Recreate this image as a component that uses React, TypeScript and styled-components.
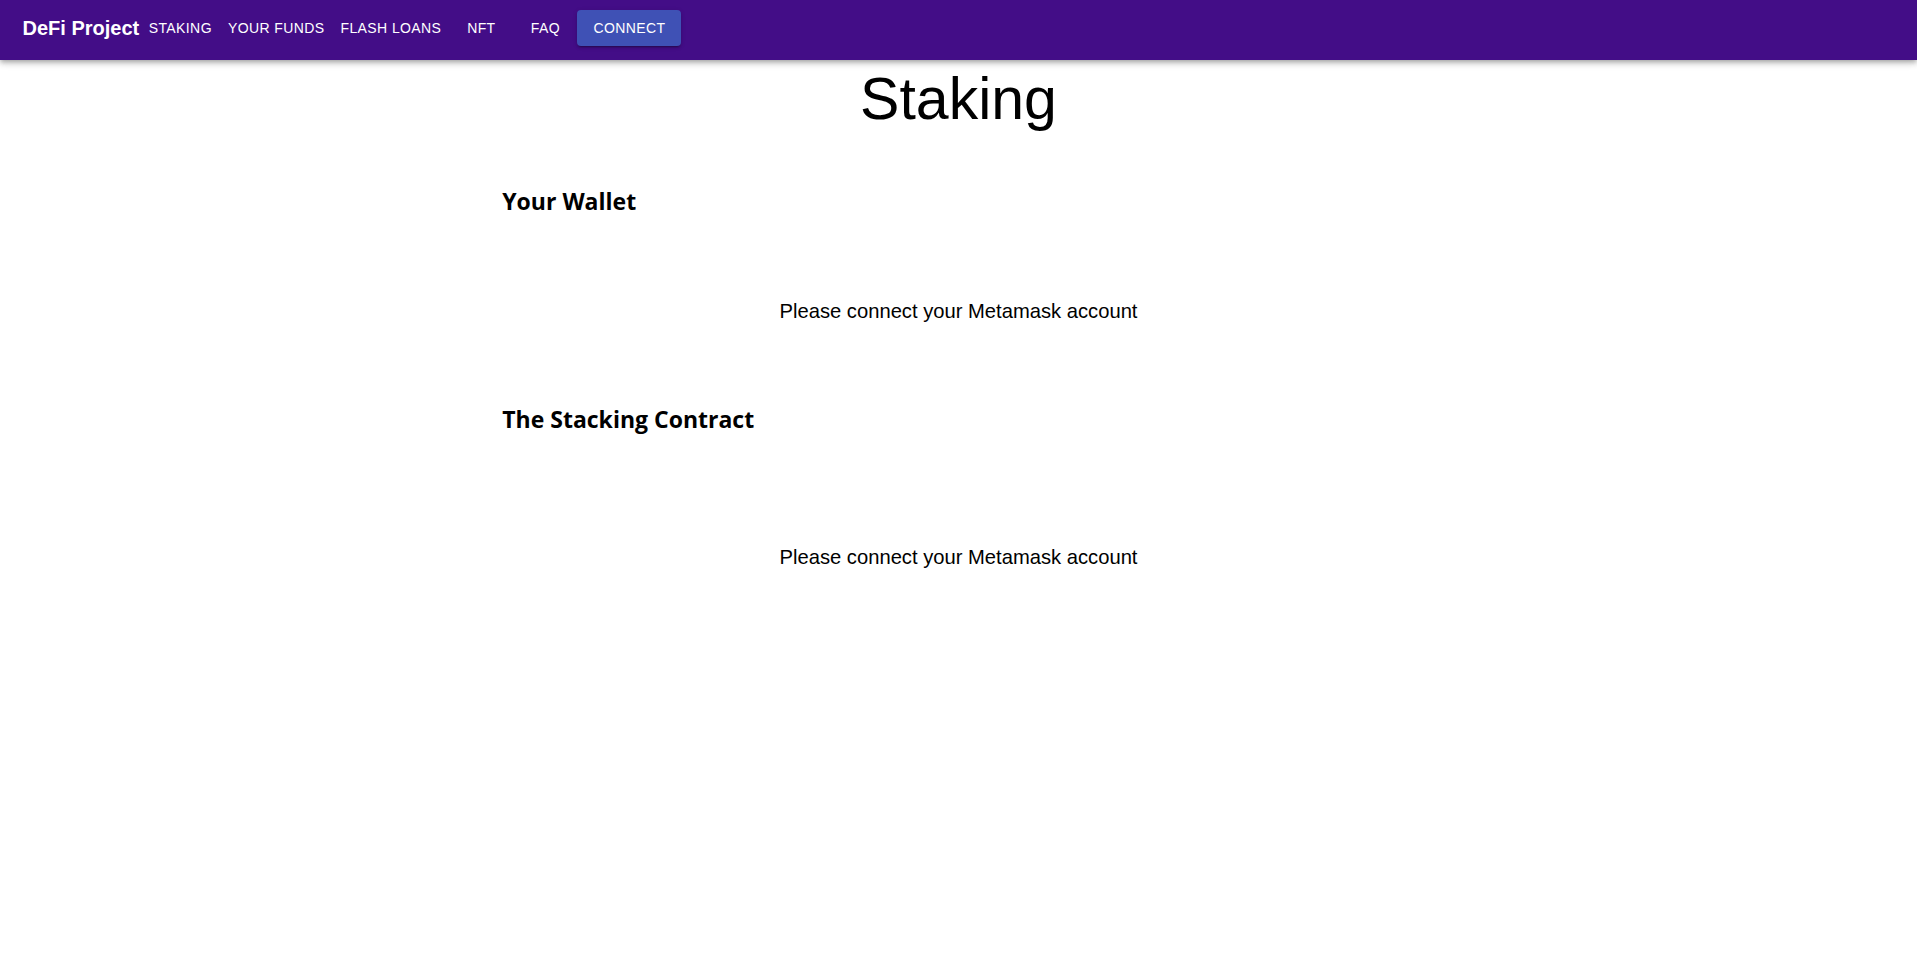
import React from "react";
import styled, { createGlobalStyle } from "styled-components";

const GlobalStyle = createGlobalStyle`
  html, body {
    margin: 0;
    padding: 0;
    background: #ffffff;
  }
  body {
    font-family: "Liberation Sans", Arial, Helvetica, sans-serif;
    color: #000000;
  }
`;

const AppBar = styled.header`
  height: 60px;
  box-sizing: border-box;
  display: flex;
  align-items: center;
  padding: 0 20px 4px 22.5px;
  background: #430d87;
  color: #ffffff;
  box-shadow: 0px 2px 4px -1px rgba(0, 0, 0, 0.2),
    0px 4px 5px 0px rgba(0, 0, 0, 0.14), 0px 1px 10px 0px rgba(0, 0, 0, 0.12);
  position: relative;
  z-index: 1;
`;

const Brand = styled.div`
  font-family: "Liberation Sans", Arial, sans-serif;
  font-weight: 700;
  font-size: 20px;
  line-height: 1.6;
  margin-right: 1.5px;
  white-space: nowrap;
`;

const NavList = styled.nav`
  display: flex;
  align-items: center;
`;

const NavButton = styled.button<{ $primary?: boolean }>`
  appearance: none;
  border: 0;
  margin: 0;
  cursor: pointer;
  font-family: "Liberation Sans", Arial, sans-serif;
  font-size: 14px;
  font-weight: 400;
  line-height: 1.75;
  letter-spacing: 0.02857em;
  text-transform: uppercase;
  color: #ffffff;
  min-width: 64px;
  border-radius: 4px;
  white-space: nowrap;
  padding: ${(p) => (p.$primary ? "6px 16px" : "6px 8px")};
  background: ${(p) => (p.$primary ? "#3f51b5" : "transparent")};
  box-shadow: ${(p) =>
    p.$primary
      ? "0px 3px 1px -2px rgba(0,0,0,0.2), 0px 2px 2px 0px rgba(0,0,0,0.14), 0px 1px 5px 0px rgba(0,0,0,0.12)"
      : "none"};
`;

const PageTitle = styled.h1`
  margin: 5px 0 0 0;
  font-family: "Liberation Sans", Arial, sans-serif;
  font-weight: 400;
  font-size: 59px;
  line-height: 69px;
  text-align: center;
  color: #000000;
`;

const Content = styled.main`
  width: 50%;
  margin: 0 auto;
  padding: 0 23px;
  box-sizing: border-box;
  display: flex;
  flex-direction: column;
`;

const SectionHeading = styled.h2<{ $offset: number }>`
  margin: ${(p) => p.$offset}px 0 0 0;
  font-family: "Open Sans", "Noto Sans", sans-serif;
  font-weight: 700;
  font-size: 23px;
  line-height: 30px;
  color: #000000;
`;

const Notice = styled.p<{ $offset: number }>`
  margin: ${(p) => p.$offset}px 0 0 0;
  font-family: "Liberation Sans", Arial, sans-serif;
  font-size: 20.2px;
  line-height: 24px;
  text-align: center;
  color: #000000;
`;

const navItems = ["Staking", "Your Funds", "Flash Loans", "NFT", "FAQ"];

export default function App() {
  return (
    <>
      <GlobalStyle />
      <AppBar>
        <Brand>DeFi Project</Brand>
        <NavList>
          {navItems.map((item) => (
            <NavButton key={item}>{item}</NavButton>
          ))}
          <NavButton $primary>Connect</NavButton>
        </NavList>
      </AppBar>
      <PageTitle>Staking</PageTitle>
      <Content>
        <SectionHeading $offset={52}>Your Wallet</SectionHeading>
        <Notice $offset={83}>Please connect your Metamask account</Notice>
        <SectionHeading $offset={81}>The Stacking Contract</SectionHeading>
        <Notice $offset={111}>Please connect your Metamask account</Notice>
      </Content>
    </>
  );
}
